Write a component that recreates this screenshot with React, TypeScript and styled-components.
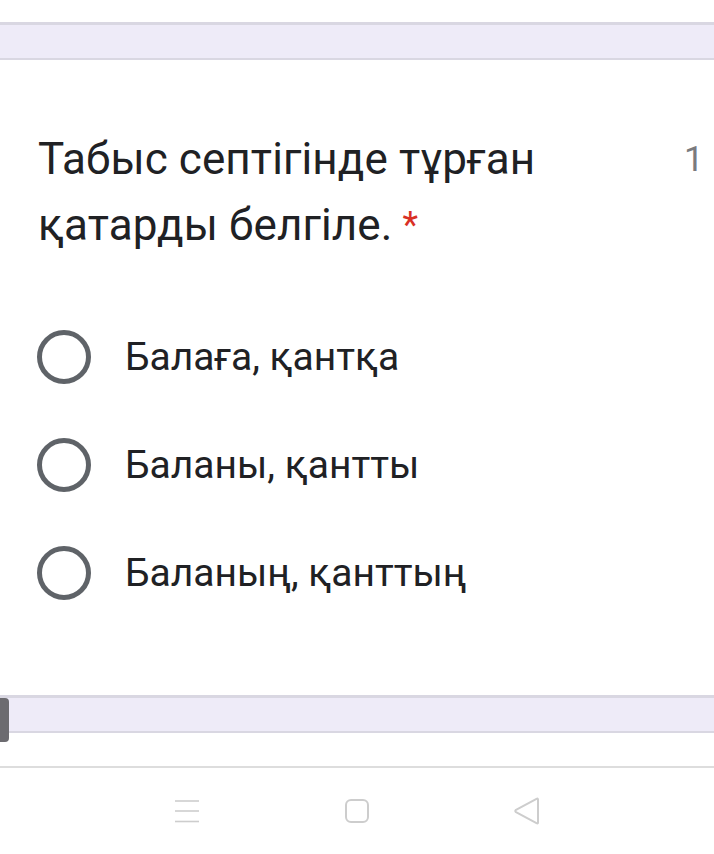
import React from "react";
import styled, { createGlobalStyle } from "styled-components";

const Global = createGlobalStyle`
  html, body {
    margin: 0;
    padding: 0;
    background: #ffffff;
    width: 714px;
    height: 854px;
    overflow: hidden;
  }
  * { box-sizing: border-box; }
`;

const Page = styled.div`
  width: 714px;
  height: 854px;
  display: flex;
  flex-direction: column;
  background: #ffffff;
  font-family: Roboto, "Noto Sans", sans-serif;
  color: #202124;
  overflow: hidden;
`;

const Band = styled.div<{ $top: number }>`
  position: relative;
  margin-top: ${(p) => p.$top}px;
  height: 38px;
  background: #eeebf8;
  border-top: 3px solid #d9d7e2;
  border-bottom: 2px solid #d9d7e2;
  flex-shrink: 0;
`;

const Tab = styled.div`
  position: absolute;
  left: 0;
  top: 0;
  width: 9px;
  height: 44px;
  background: #6c6b70;
  border-radius: 0 4px 4px 0;
`;

const Header = styled.div`
  display: flex;
  align-items: flex-start;
  margin-top: 66px;
  padding-left: 38px;
`;

const Title = styled.div`
  flex: 0 0 600px;
  font-family: Roboto, "Noto Sans", sans-serif;
  font-size: 44px;
  line-height: 66px;
  letter-spacing: 0.1px;
  color: #202124;
`;

const Required = styled.span`
  color: #d93025;
  margin-left: 10px;
  font-size: 36px;
  vertical-align: 3px;
`;

const Points = styled.div`
  margin-left: 46px;
  margin-top: 12px;
  font-size: 35px;
  line-height: 44px;
  color: #7a7a7e;
  white-space: nowrap;
  letter-spacing: 2px;
`;

const Options = styled.div`
  display: flex;
  flex-direction: column;
  margin-top: 45px;
  padding-left: 37px;
`;

const Option = styled.label`
  display: flex;
  align-items: center;
  height: 108px;
  gap: 34px;
`;

const Radio = styled.span`
  width: 54px;
  height: 54px;
  border-radius: 50%;
  border: 5px solid #5f6368;
  flex-shrink: 0;
`;

const OptionText = styled.span`
  font-family: Roboto, "Noto Sans", sans-serif;
  font-size: 39px;
  color: #202124;
`;

const Separator = styled.div`
  margin-top: 33px;
  height: 2px;
  background: #dddddd;
  flex-shrink: 0;
`;

const NavBar = styled.div`
  display: flex;
  justify-content: center;
  align-items: center;
  height: 86px;
`;

const NavCell = styled.div`
  width: 170px;
  display: flex;
  justify-content: center;
  align-items: center;
`;

const options = ["Балаға, қантқа", "Баланы, қантты", "Баланың, қанттың"];

export default function App() {
  return (
    <Page>
      <Global />
      <Band $top={22} />
      <Header>
        <Title>
          Табыс септігінде тұрған қатарды белгіле.<Required>*</Required>
        </Title>
        <Points>1 ұпай</Points>
      </Header>
      <Options>
        {options.map((o) => (
          <Option key={o}>
            <Radio />
            <OptionText>{o}</OptionText>
          </Option>
        ))}
      </Options>
      <Band $top={68}>
        <Tab />
      </Band>
      <Separator />
      <NavBar>
        <NavCell>
          <svg width="26" height="24" viewBox="0 0 26 24">
            <g stroke="#cdcdcd" strokeWidth="1.6">
              <line x1="1" y1="2" x2="25" y2="2" />
              <line x1="1" y1="12" x2="25" y2="12" />
              <line x1="1" y1="22.5" x2="25" y2="22.5" />
            </g>
          </svg>
        </NavCell>
        <NavCell>
          <svg width="26" height="26" viewBox="0 0 26 26">
            <rect x="2" y="2" width="22" height="22" rx="5" fill="none" stroke="#cdcdcd" strokeWidth="2" />
          </svg>
        </NavCell>
        <NavCell>
          <svg width="28" height="28" viewBox="0 0 28 28">
            <path d="M25 2.5 L25 25.5 Q25 27 23.5 26.2 L3 15.2 Q1.5 14 3 12.8 L23.5 1.8 Q25 1 25 2.5 Z" fill="none" stroke="#cdcdcd" strokeWidth="2" strokeLinejoin="round" />
          </svg>
        </NavCell>
      </NavBar>
    </Page>
  );
}
